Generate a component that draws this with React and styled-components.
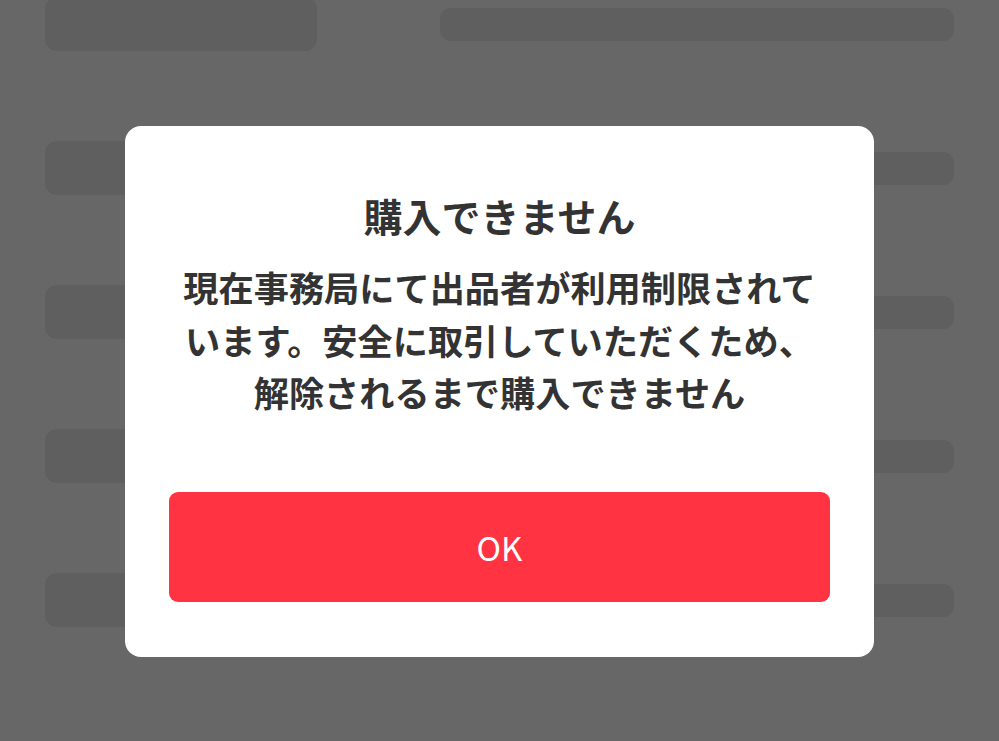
import React from "react";
import styled, { createGlobalStyle } from "styled-components";

const GlobalStyle = createGlobalStyle`
  html, body {
    margin: 0;
    padding: 0;
    background: #676767;
  }
  body {
    font-family: "Noto Sans CJK JP", "Noto Sans", sans-serif;
  }
`;

const Screen = styled.div`
  position: relative;
  width: 999px;
  height: 741px;
  overflow: hidden;
  background: #676767;
`;

const SkeletonList = styled.div`
  display: flex;
  flex-direction: column;
  gap: 90px;
  margin-top: -3px;
  padding: 0 45px;
`;

const SkeletonRow = styled.div`
  display: flex;
  align-items: flex-start;
  gap: 123px;
`;

const SkeletonThumb = styled.div`
  width: 272px;
  height: 54px;
  flex-shrink: 0;
  border-radius: 12px;
  background: #5f5f5f;
`;

const SkeletonBar = styled.div`
  flex: 1;
  height: 33px;
  margin-top: 11px;
  border-radius: 11px;
  background: #5f5f5f;
`;

const Dialog = styled.div`
  position: absolute;
  left: 125px;
  top: 126px;
  width: 749px;
  height: 531px;
  box-sizing: border-box;
  padding: 66px 44px 55px;
  border-radius: 16px;
  background: #fff;
  display: flex;
  flex-direction: column;
  align-items: stretch;
  text-align: center;
  color: #333;
`;

const Title = styled.h2`
  margin: 0;
  font-size: 39px;
  line-height: 47px;
  font-weight: 700;
`;

const Message = styled.p`
  margin: 22px 0 0;
  font-size: 35.2px;
  line-height: 52.5px;
  font-weight: 700;
`;

const OkButton = styled.button`
  margin-top: auto;
  height: 110px;
  border: none;
  border-radius: 9px;
  background: #ff3341;
  color: #fff;
  font-family: "Noto Sans CJK JP", "Noto Sans", sans-serif;
  font-size: 33px;
  font-weight: 400;
  cursor: pointer;
`;

const rows = [0, 1, 2, 3, 4];

export default function App() {
  return (
    <Screen>
      <GlobalStyle />
      <SkeletonList>
        {rows.map(i => (
          <SkeletonRow key={i}>
            <SkeletonThumb />
            <SkeletonBar />
          </SkeletonRow>
        ))}
      </SkeletonList>
      <Dialog role="dialog">
        <Title>購入できません</Title>
        <Message>
          現在事務局にて出品者が利用制限されています。安全に取引していただくため、解除されるまで購入できません
        </Message>
        <OkButton>OK</OkButton>
      </Dialog>
    </Screen>
  );
}
